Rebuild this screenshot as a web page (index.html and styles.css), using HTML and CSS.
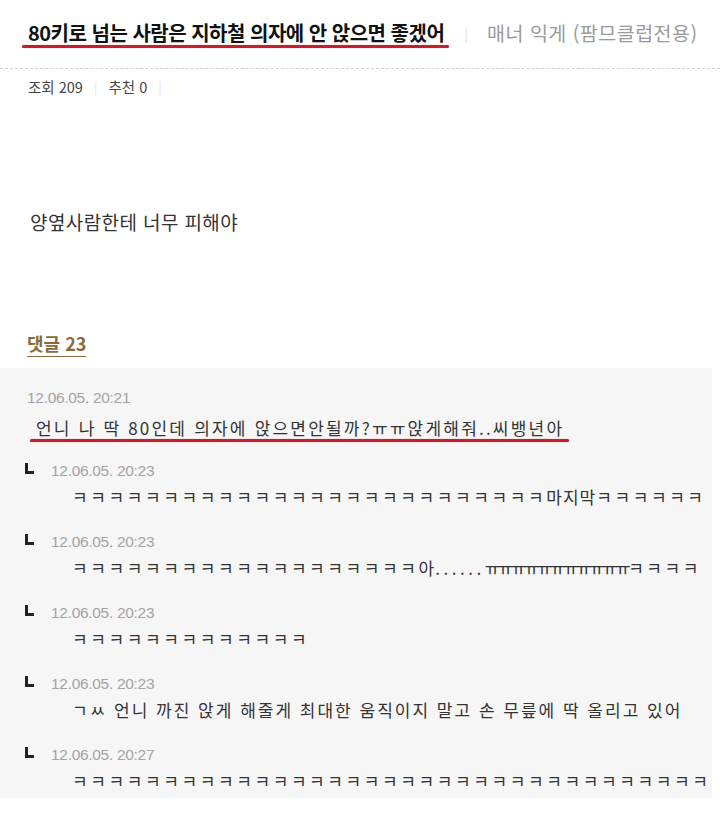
FILE: index.html
```html
<!DOCTYPE html>
<html lang="ko">

<head>
    <meta charset="UTF-8">
    <meta name="viewport" content="width=device-width, initial-scale=1.0">
    <title>80키로 넘는 사람은 지하철 의자에 안 앉으면 좋겠어</title>
    <link rel="stylesheet" href="styles.css">
</head>

<body>
    <div class="post-head">
        <h1 class="post-title"><span class="marked">80키로 넘는 사람은 지하철 의자에 안 앉으면 좋겠어</span></h1>
        <span class="sep">|</span>
        <span class="board">매너 익게 (팜므클럽전용)</span>
    </div>

    <div class="post-meta">
        <span>조회 209</span>
        <span class="sep">|</span>
        <span>추천 0</span>
        <span class="sep">|</span>
    </div>

    <p class="post-body">양옆사람한테 너무 피해야</p>

    <div class="comment-count"><span>댓글 23</span></div>

    <div class="comments">
        <div class="comment">
            <div class="comment-date">12.06.05. 20:21</div>
            <div class="comment-text first"><span class="marked">언니 나 딱 80인데 의자에 앉으면안될까?ㅠㅠ앉게해줘..씨뱅년아</span></div>
        </div>

        <div class="comment reply">
            <div class="comment-date"><span class="reply-mark"></span>12.06.05. 20:23</div>
            <div class="comment-text"><span class="kk">ㅋㅋㅋㅋㅋㅋㅋㅋㅋㅋㅋㅋㅋㅋㅋㅋㅋㅋㅋㅋㅋㅋㅋㅋㅋㅋ</span>마지막<span class="kk">ㅋㅋㅋㅋㅋㅋ</span></div>
        </div>

        <div class="comment reply">
            <div class="comment-date"><span class="reply-mark"></span>12.06.05. 20:23</div>
            <div class="comment-text"><span class="kk">ㅋㅋㅋㅋㅋㅋㅋㅋㅋㅋㅋㅋㅋㅋㅋㅋㅋㅋㅋ</span>아<span class="dots">......</span><span class="tight">ㅠㅠㅠㅠㅠㅠㅠㅠㅠㅠㅠ</span><span class="kk">ㅋㅋㅋㅋ</span></div>
        </div>

        <div class="comment reply">
            <div class="comment-date"><span class="reply-mark"></span>12.06.05. 20:23</div>
            <div class="comment-text"><span class="kk">ㅋㅋㅋㅋㅋㅋㅋㅋㅋㅋㅋㅋㅋ</span></div>
        </div>

        <div class="comment reply">
            <div class="comment-date"><span class="reply-mark"></span>12.06.05. 20:23</div>
            <div class="comment-text sentence">ㄱㅆ 언니 까진 앉게 해줄게 최대한 움직이지 말고 손 무릎에 딱 올리고 있어</div>
        </div>

        <div class="comment reply">
            <div class="comment-date"><span class="reply-mark"></span>12.06.05. 20:27</div>
            <div class="comment-text"><span class="kk">ㅋㅋㅋㅋㅋㅋㅋㅋㅋㅋㅋㅋㅋㅋㅋㅋㅋㅋㅋㅋㅋㅋㅋㅋㅋㅋㅋㅋㅋㅋㅋㅋㅋㅋㅋ</span></div>
        </div>
    </div>
</body>

</html>
```

FILE: styles.css
```css
body {
    margin: 0;
    font-family: "Noto Sans CJK KR", "Noto Sans", sans-serif;
    color: #333;
    background-color: #fff;
}

.post-head {
    display: flex;
    align-items: center;
    padding: 20px 0 22px 28px;
    border-bottom: 1px dashed #cfcfcf;
    line-height: 26px;
    white-space: nowrap;
}

.post-title {
    margin: 0;
    font-size: 20px;
    font-weight: bold;
    line-height: 26px;
    color: #111;
    letter-spacing: -0.5px;
}

.marked {
    position: relative;
    display: inline-block;
}

/* red marker line drawn under the text */
.marked::after {
    content: '';
    position: absolute;
    left: -6px;
    right: -5px;
    bottom: -2px;
    height: 3px;
    border-radius: 2px;
    background-color: #c81e2c;
    box-shadow: 0 0 1px rgba(200, 30, 44, 0.6);
}

.sep {
    color: #ddd;
    font-size: 14px;
    margin: 0 19px 0 20px;
}

.board {
    font-size: 19.5px;
    color: #9a9a9a;
    letter-spacing: 0.5px;
}

.post-meta {
    display: flex;
    align-items: center;
    margin-top: 9px;
    padding-left: 28px;
    font-size: 14.5px;
    line-height: 18px;
    color: #444;
}

.post-meta .sep {
    font-size: 13px;
    margin: 0 11px;
}

.post-body {
    margin: 114px 0 0 30px;
    font-size: 19px;
    line-height: 24px;
    color: #333;
    letter-spacing: 0.4px;
}

.comment-count {
    margin: 99px 0 15px 27px;
    font-size: 18px;
    font-weight: bold;
    line-height: 20px;
    color: #8a6a3a;
}

.comment-count span {
    border-bottom: 1px solid #8a6a3a;
}

.comments {
    width: 712px;
    padding: 20px 0 5px;
    background-color: #f6f6f6;
    overflow: hidden;
}

.comment-date {
    display: flex;
    align-items: center;
    padding-left: 27px;
    font-family: "Liberation Sans", sans-serif;
    font-size: 15.5px;
    line-height: 20px;
    color: #a3a3a3;
    letter-spacing: -0.3px;
}

.comment-text {
    margin-top: 8px;
    padding-left: 36px;
    font-size: 17px;
    line-height: 24px;
    color: #333;
    letter-spacing: 1px;
    white-space: nowrap;
}

.comment-text.first {
    letter-spacing: 2.2px;
}

.comment + .reply {
    margin-top: 21px;
}

.reply + .reply {
    margin-top: 23px;
}

.reply .comment-date {
    padding-left: 25px;
}

.reply .comment-text {
    margin-top: 4px;
    padding-left: 72px;
}

.reply .comment-text.sentence {
    letter-spacing: 2px;
}

.reply-mark {
    display: inline-block;
    width: 6px;
    height: 8px;
    margin: -5px 17px 0 0;
    border-left: 3px solid #222;
    border-bottom: 3px solid #222;
}

.kk {
    letter-spacing: 2.6px;
}

.dots {
    letter-spacing: 3.5px;
}

.tight {
    letter-spacing: -2.6px;
}
```
